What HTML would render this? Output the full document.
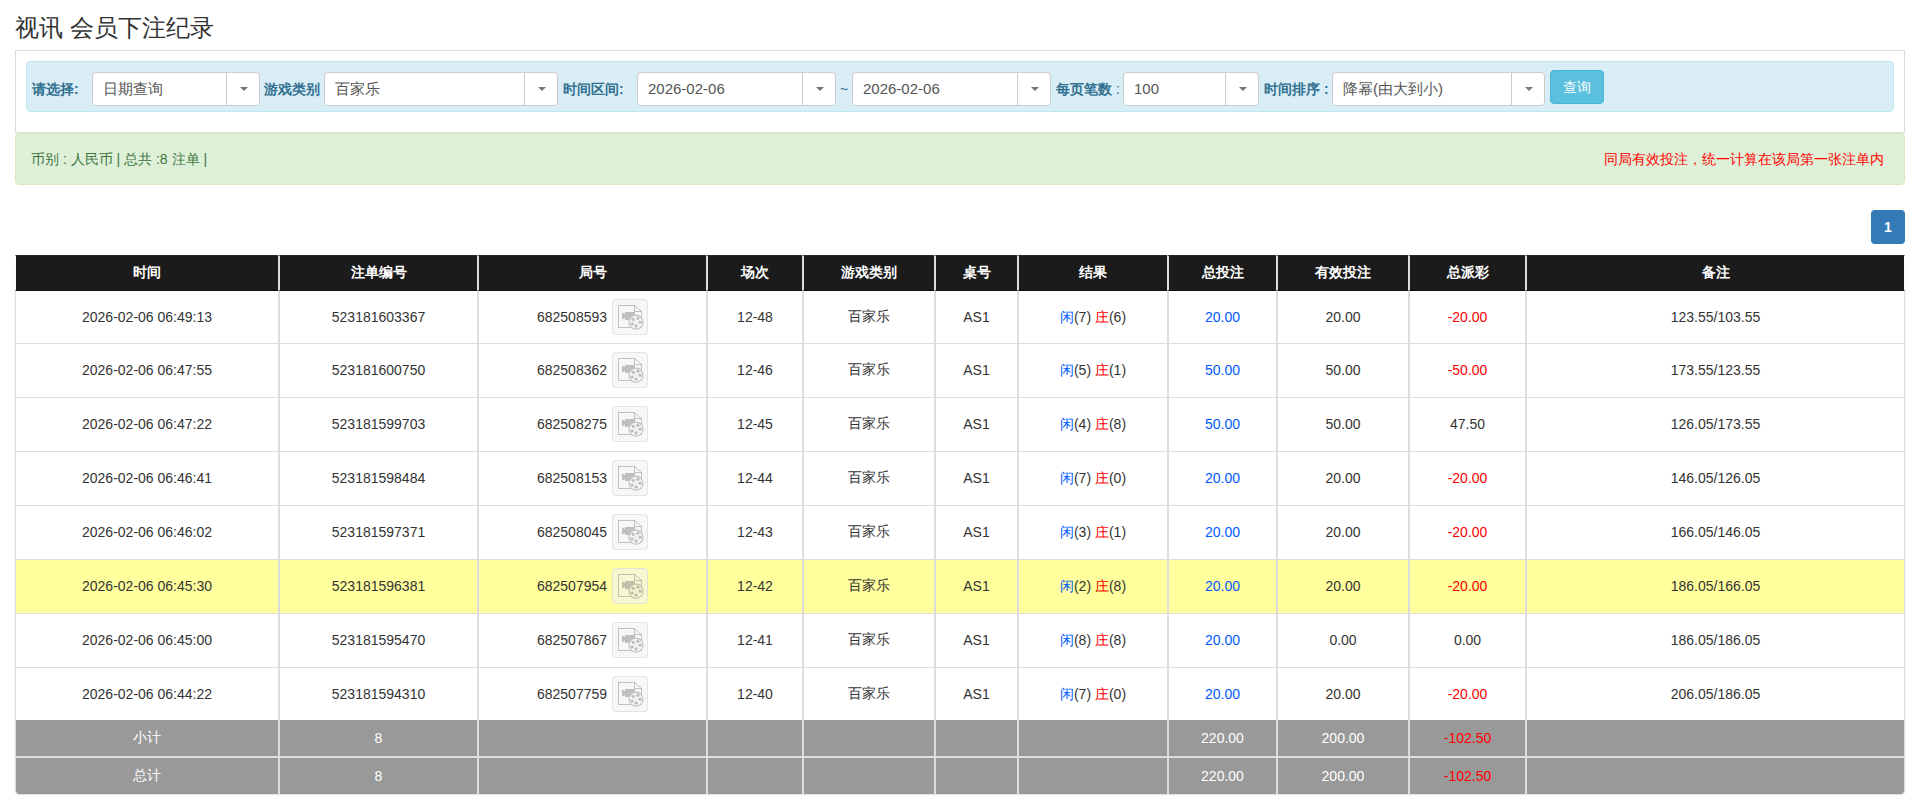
<!DOCTYPE html>
<html><head><meta charset="utf-8">
<style>
*{box-sizing:border-box;margin:0;padding:0}
html,body{width:1919px;height:809px;overflow:hidden;background:#fff}
body{font-family:"Liberation Sans",sans-serif;font-size:14px;color:#333;position:relative}
.abs{position:absolute}
.title{left:15px;top:11px;font-size:24px;line-height:34px;color:#333;white-space:nowrap}
.panel{left:15px;top:50px;width:1890px;height:83px;border:1px solid #ddd;background:#fff}
.info{left:26px;top:61px;width:1868px;height:51px;background:#d9edf7;border:1px solid #bce8f1;border-radius:4px}
.lbl{position:absolute;top:79px;font-size:14px;line-height:20px;font-weight:bold;color:#31708f;white-space:nowrap}
.sel{position:absolute;top:72px;height:34px;background:#fff;border:1px solid #ccc;border-radius:4px}
.sel .t{position:absolute;left:10px;top:0;line-height:32px;font-size:15px;color:#555;white-space:nowrap}
.sel .d{position:absolute;right:0;top:0;width:33px;height:32px;border-left:1px solid #ccc}
.sel .d:after{content:"";position:absolute;left:13px;top:14px;border-left:4px solid transparent;border-right:4px solid transparent;border-top:4px solid #777}
.btn{left:1550px;top:70px;width:54px;height:34px;background:#5bc0de;border:1px solid #46b8da;border-radius:4px;color:#fff;font-size:14px;line-height:32px;text-align:center}
.succ{left:15px;top:133px;width:1890px;height:52px;background:#dff0d8;border:1px solid #d6e9c6;border-radius:4px}
.succ .l{position:absolute;left:15px;top:15px;line-height:20px;font-size:14px;color:#3c763d;white-space:nowrap}
.succ .r{position:absolute;right:20px;top:15px;line-height:20px;font-size:14px;color:#f00;white-space:nowrap}
.pg{left:1871px;top:210px;width:34px;height:34px;background:#337ab7;border-radius:4px;color:#fff;font-weight:bold;font-size:14px;line-height:34px;text-align:center}
table{position:absolute;left:15px;top:255px;width:1890px;border-collapse:separate;border-spacing:0;table-layout:fixed}
th,td{text-align:center;white-space:nowrap;padding:0;box-sizing:border-box}
th{background:#1b1b1b;color:#fff;height:36px;font-weight:bold;font-size:14px;border-left:2px solid #ddd;border-top:1px solid #262626;border-bottom:1px solid #111}
th:first-child,td:first-child{border-left:1px solid #ddd}
th:last-child,td:last-child{border-right:1px solid #ddd}
td{height:54px;border-left:2px solid #ddd;border-bottom:1px solid #ddd;font-size:14px;color:#333}
tr.r1 td{height:53px;padding-bottom:0}
td{padding-bottom:1px}
tr.r8 td{height:52px;border-bottom:none}
tr.y td{background:#ffff9e}
tr.f td{background:#999;color:#fff;height:36px;border-bottom:none;padding-bottom:0}
tr.f2 td:first-child{border-bottom-left-radius:4px}tr.f2 td:last-child{border-bottom-right-radius:4px}
table{box-shadow:0 1px 2px -1px rgba(0,0,0,.45);border-radius:0 0 4px 4px}
th:first-child{border-left-color:#fff}th:last-child{border-right-color:#fff}
tr.f2 td{height:38px;border-top:2px solid #ddd}
td.b,span.b{color:#0059ff}td.r,span.r,tr.f td.r{color:#f00}
.ic{display:inline-block;vertical-align:middle;width:36px;height:36px;border:1px solid rgba(200,200,200,.4);border-radius:4px;background:rgba(242,242,242,.62);margin:-12px 0 -12px 5px;position:relative;top:-1px}
.ic svg{position:absolute;left:-1px;top:-1px}
.res{position:relative;top:1px}
</style></head><body>
<div class="abs title">视讯 会员下注纪录</div>
<div class="abs panel"></div>
<div class="abs info"></div>
<div class="lbl" style="left:32px">请选择:</div>
<div class="sel" style="left:92px;width:168px"><span class="t">日期查询</span><span class="d"></span></div>
<div class="lbl" style="left:264px">游戏类别</div>
<div class="sel" style="left:324px;width:234px"><span class="t">百家乐</span><span class="d"></span></div>
<div class="lbl" style="left:563px">时间区间:</div>
<div class="sel" style="left:637px;width:199px"><span class="t">2026-02-06</span><span class="d"></span></div>
<div class="lbl" style="left:840px;font-weight:normal">~</div>
<div class="sel" style="left:852px;width:199px"><span class="t">2026-02-06</span><span class="d"></span></div>
<div class="lbl" style="left:1056px">每页笔数 <span style="font-weight:normal">:</span></div>
<div class="sel" style="left:1123px;width:136px"><span class="t">100</span><span class="d"></span></div>
<div class="lbl" style="left:1264px">时间排序 :</div>
<div class="sel" style="left:1332px;width:213px"><span class="t">降幂(由大到小)</span><span class="d"></span></div>
<div class="abs btn">查询</div>
<div class="abs succ"><span class="l">币别 : 人民币 | 总共 :8 注单 |</span><span class="r">同局有效投注，统一计算在该局第一张注单内</span></div>
<div class="abs pg">1</div>
<table>
<colgroup><col style="width:263px"><col style="width:199px"><col style="width:229px"><col style="width:96px"><col style="width:132px"><col style="width:83px"><col style="width:150px"><col style="width:109px"><col style="width:132px"><col style="width:117px"><col style="width:380px"></colgroup>
<tr><th>时间</th><th>注单编号</th><th>局号</th><th>场次</th><th>游戏类别</th><th>桌号</th><th>结果</th><th>总投注</th><th>有效投注</th><th>总派彩</th><th>备注</th></tr>
<tr class="r1"><td>2026-02-06 06:49:13</td><td>523181603367</td><td>682508593<span class="ic"><svg width="36" height="36" viewBox="0 0 36 36"><mask id="mk" maskUnits="userSpaceOnUse" x="0" y="0" width="36" height="36"><rect width="36" height="36" fill="#fff"/><circle cx="24" cy="23.2" r="7.6" fill="#000"/></mask><g fill="none" stroke="#787878" stroke-opacity=".42"><path d="M6.5 6.5H22.5L29.5 12.5V28.5H6.5Z" mask="url(#mk)"/><path d="M22.5 6.5V12.5H29.5"/><circle cx="24" cy="23.2" r="7" stroke-width="1.2"/></g><g fill="#787878" fill-opacity=".44"><path d="M10 13.5L13 15V13H23V21H13V19L10 20.5Z" mask="url(#mk)"/><circle cx="21.2" cy="20.4" r="1.7"/><circle cx="25.8" cy="19.2" r="1.7"/><circle cx="28.1" cy="23.3" r="1.7"/><circle cx="24.1" cy="27" r="1.7"/><circle cx="20.1" cy="24.9" r="1.7"/><circle cx="23.8" cy="22.9" r="0.6"/></g></svg></span></td><td>12-48</td><td>百家乐</td><td>AS1</td><td><span class="res"><span class="b">闲</span>(7) <span class="r">庄</span>(6)</span></td><td class="b">20.00</td><td>20.00</td><td class="r">-20.00</td><td>123.55/103.55</td></tr>
<tr><td>2026-02-06 06:47:55</td><td>523181600750</td><td>682508362<span class="ic"><svg width="36" height="36" viewBox="0 0 36 36"><mask id="mk" maskUnits="userSpaceOnUse" x="0" y="0" width="36" height="36"><rect width="36" height="36" fill="#fff"/><circle cx="24" cy="23.2" r="7.6" fill="#000"/></mask><g fill="none" stroke="#787878" stroke-opacity=".42"><path d="M6.5 6.5H22.5L29.5 12.5V28.5H6.5Z" mask="url(#mk)"/><path d="M22.5 6.5V12.5H29.5"/><circle cx="24" cy="23.2" r="7" stroke-width="1.2"/></g><g fill="#787878" fill-opacity=".44"><path d="M10 13.5L13 15V13H23V21H13V19L10 20.5Z" mask="url(#mk)"/><circle cx="21.2" cy="20.4" r="1.7"/><circle cx="25.8" cy="19.2" r="1.7"/><circle cx="28.1" cy="23.3" r="1.7"/><circle cx="24.1" cy="27" r="1.7"/><circle cx="20.1" cy="24.9" r="1.7"/><circle cx="23.8" cy="22.9" r="0.6"/></g></svg></span></td><td>12-46</td><td>百家乐</td><td>AS1</td><td><span class="res"><span class="b">闲</span>(5) <span class="r">庄</span>(1)</span></td><td class="b">50.00</td><td>50.00</td><td class="r">-50.00</td><td>173.55/123.55</td></tr>
<tr><td>2026-02-06 06:47:22</td><td>523181599703</td><td>682508275<span class="ic"><svg width="36" height="36" viewBox="0 0 36 36"><mask id="mk" maskUnits="userSpaceOnUse" x="0" y="0" width="36" height="36"><rect width="36" height="36" fill="#fff"/><circle cx="24" cy="23.2" r="7.6" fill="#000"/></mask><g fill="none" stroke="#787878" stroke-opacity=".42"><path d="M6.5 6.5H22.5L29.5 12.5V28.5H6.5Z" mask="url(#mk)"/><path d="M22.5 6.5V12.5H29.5"/><circle cx="24" cy="23.2" r="7" stroke-width="1.2"/></g><g fill="#787878" fill-opacity=".44"><path d="M10 13.5L13 15V13H23V21H13V19L10 20.5Z" mask="url(#mk)"/><circle cx="21.2" cy="20.4" r="1.7"/><circle cx="25.8" cy="19.2" r="1.7"/><circle cx="28.1" cy="23.3" r="1.7"/><circle cx="24.1" cy="27" r="1.7"/><circle cx="20.1" cy="24.9" r="1.7"/><circle cx="23.8" cy="22.9" r="0.6"/></g></svg></span></td><td>12-45</td><td>百家乐</td><td>AS1</td><td><span class="res"><span class="b">闲</span>(4) <span class="r">庄</span>(8)</span></td><td class="b">50.00</td><td>50.00</td><td>47.50</td><td>126.05/173.55</td></tr>
<tr><td>2026-02-06 06:46:41</td><td>523181598484</td><td>682508153<span class="ic"><svg width="36" height="36" viewBox="0 0 36 36"><mask id="mk" maskUnits="userSpaceOnUse" x="0" y="0" width="36" height="36"><rect width="36" height="36" fill="#fff"/><circle cx="24" cy="23.2" r="7.6" fill="#000"/></mask><g fill="none" stroke="#787878" stroke-opacity=".42"><path d="M6.5 6.5H22.5L29.5 12.5V28.5H6.5Z" mask="url(#mk)"/><path d="M22.5 6.5V12.5H29.5"/><circle cx="24" cy="23.2" r="7" stroke-width="1.2"/></g><g fill="#787878" fill-opacity=".44"><path d="M10 13.5L13 15V13H23V21H13V19L10 20.5Z" mask="url(#mk)"/><circle cx="21.2" cy="20.4" r="1.7"/><circle cx="25.8" cy="19.2" r="1.7"/><circle cx="28.1" cy="23.3" r="1.7"/><circle cx="24.1" cy="27" r="1.7"/><circle cx="20.1" cy="24.9" r="1.7"/><circle cx="23.8" cy="22.9" r="0.6"/></g></svg></span></td><td>12-44</td><td>百家乐</td><td>AS1</td><td><span class="res"><span class="b">闲</span>(7) <span class="r">庄</span>(0)</span></td><td class="b">20.00</td><td>20.00</td><td class="r">-20.00</td><td>146.05/126.05</td></tr>
<tr><td>2026-02-06 06:46:02</td><td>523181597371</td><td>682508045<span class="ic"><svg width="36" height="36" viewBox="0 0 36 36"><mask id="mk" maskUnits="userSpaceOnUse" x="0" y="0" width="36" height="36"><rect width="36" height="36" fill="#fff"/><circle cx="24" cy="23.2" r="7.6" fill="#000"/></mask><g fill="none" stroke="#787878" stroke-opacity=".42"><path d="M6.5 6.5H22.5L29.5 12.5V28.5H6.5Z" mask="url(#mk)"/><path d="M22.5 6.5V12.5H29.5"/><circle cx="24" cy="23.2" r="7" stroke-width="1.2"/></g><g fill="#787878" fill-opacity=".44"><path d="M10 13.5L13 15V13H23V21H13V19L10 20.5Z" mask="url(#mk)"/><circle cx="21.2" cy="20.4" r="1.7"/><circle cx="25.8" cy="19.2" r="1.7"/><circle cx="28.1" cy="23.3" r="1.7"/><circle cx="24.1" cy="27" r="1.7"/><circle cx="20.1" cy="24.9" r="1.7"/><circle cx="23.8" cy="22.9" r="0.6"/></g></svg></span></td><td>12-43</td><td>百家乐</td><td>AS1</td><td><span class="res"><span class="b">闲</span>(3) <span class="r">庄</span>(1)</span></td><td class="b">20.00</td><td>20.00</td><td class="r">-20.00</td><td>166.05/146.05</td></tr>
<tr class="y"><td>2026-02-06 06:45:30</td><td>523181596381</td><td>682507954<span class="ic"><svg width="36" height="36" viewBox="0 0 36 36"><mask id="mk" maskUnits="userSpaceOnUse" x="0" y="0" width="36" height="36"><rect width="36" height="36" fill="#fff"/><circle cx="24" cy="23.2" r="7.6" fill="#000"/></mask><g fill="none" stroke="#787878" stroke-opacity=".42"><path d="M6.5 6.5H22.5L29.5 12.5V28.5H6.5Z" mask="url(#mk)"/><path d="M22.5 6.5V12.5H29.5"/><circle cx="24" cy="23.2" r="7" stroke-width="1.2"/></g><g fill="#787878" fill-opacity=".44"><path d="M10 13.5L13 15V13H23V21H13V19L10 20.5Z" mask="url(#mk)"/><circle cx="21.2" cy="20.4" r="1.7"/><circle cx="25.8" cy="19.2" r="1.7"/><circle cx="28.1" cy="23.3" r="1.7"/><circle cx="24.1" cy="27" r="1.7"/><circle cx="20.1" cy="24.9" r="1.7"/><circle cx="23.8" cy="22.9" r="0.6"/></g></svg></span></td><td>12-42</td><td>百家乐</td><td>AS1</td><td><span class="res"><span class="b">闲</span>(2) <span class="r">庄</span>(8)</span></td><td class="b">20.00</td><td>20.00</td><td class="r">-20.00</td><td>186.05/166.05</td></tr>
<tr><td>2026-02-06 06:45:00</td><td>523181595470</td><td>682507867<span class="ic"><svg width="36" height="36" viewBox="0 0 36 36"><mask id="mk" maskUnits="userSpaceOnUse" x="0" y="0" width="36" height="36"><rect width="36" height="36" fill="#fff"/><circle cx="24" cy="23.2" r="7.6" fill="#000"/></mask><g fill="none" stroke="#787878" stroke-opacity=".42"><path d="M6.5 6.5H22.5L29.5 12.5V28.5H6.5Z" mask="url(#mk)"/><path d="M22.5 6.5V12.5H29.5"/><circle cx="24" cy="23.2" r="7" stroke-width="1.2"/></g><g fill="#787878" fill-opacity=".44"><path d="M10 13.5L13 15V13H23V21H13V19L10 20.5Z" mask="url(#mk)"/><circle cx="21.2" cy="20.4" r="1.7"/><circle cx="25.8" cy="19.2" r="1.7"/><circle cx="28.1" cy="23.3" r="1.7"/><circle cx="24.1" cy="27" r="1.7"/><circle cx="20.1" cy="24.9" r="1.7"/><circle cx="23.8" cy="22.9" r="0.6"/></g></svg></span></td><td>12-41</td><td>百家乐</td><td>AS1</td><td><span class="res"><span class="b">闲</span>(8) <span class="r">庄</span>(8)</span></td><td class="b">20.00</td><td>0.00</td><td>0.00</td><td>186.05/186.05</td></tr>
<tr class="r8"><td>2026-02-06 06:44:22</td><td>523181594310</td><td>682507759<span class="ic"><svg width="36" height="36" viewBox="0 0 36 36"><mask id="mk" maskUnits="userSpaceOnUse" x="0" y="0" width="36" height="36"><rect width="36" height="36" fill="#fff"/><circle cx="24" cy="23.2" r="7.6" fill="#000"/></mask><g fill="none" stroke="#787878" stroke-opacity=".42"><path d="M6.5 6.5H22.5L29.5 12.5V28.5H6.5Z" mask="url(#mk)"/><path d="M22.5 6.5V12.5H29.5"/><circle cx="24" cy="23.2" r="7" stroke-width="1.2"/></g><g fill="#787878" fill-opacity=".44"><path d="M10 13.5L13 15V13H23V21H13V19L10 20.5Z" mask="url(#mk)"/><circle cx="21.2" cy="20.4" r="1.7"/><circle cx="25.8" cy="19.2" r="1.7"/><circle cx="28.1" cy="23.3" r="1.7"/><circle cx="24.1" cy="27" r="1.7"/><circle cx="20.1" cy="24.9" r="1.7"/><circle cx="23.8" cy="22.9" r="0.6"/></g></svg></span></td><td>12-40</td><td>百家乐</td><td>AS1</td><td><span class="res"><span class="b">闲</span>(7) <span class="r">庄</span>(0)</span></td><td class="b">20.00</td><td>20.00</td><td class="r">-20.00</td><td>206.05/186.05</td></tr>
<tr class="f"><td>小计</td><td>8</td><td></td><td></td><td></td><td></td><td></td><td>220.00</td><td>200.00</td><td class="r">-102.50</td><td></td></tr>
<tr class="f f2"><td>总计</td><td>8</td><td></td><td></td><td></td><td></td><td></td><td>220.00</td><td>200.00</td><td class="r">-102.50</td><td></td></tr>
</table>
</body></html>
